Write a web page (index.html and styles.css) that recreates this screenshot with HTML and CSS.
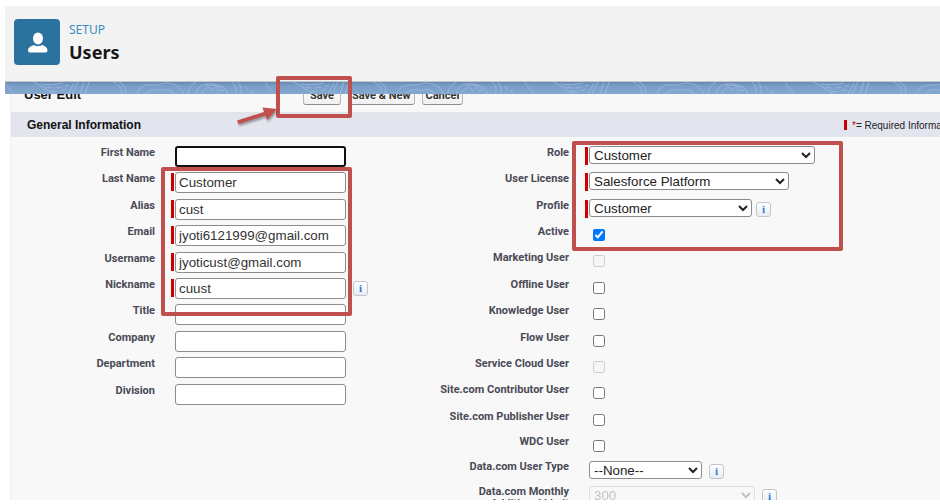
FILE: index.html
```html
<!DOCTYPE html>
<html lang="en">
<head>
<meta charset="utf-8">
<title>Users</title>
<link rel="stylesheet" href="styles.css">
</head>
<body>
<div class="page">
  <header class="setup-header">
    <svg class="setup-icon" viewBox="0 0 46 46" aria-hidden="true">
      <rect width="46" height="46" rx="4"/>
      <ellipse cx="24" cy="19.500" rx="5" ry="6"/>
      <path d="M14 31.500c0-3 3-4.500 6-5.500 1 .8 2.500 1.200 4 1.200s3-.4 4-1.200c3 1 5.500 2.500 5.500 5.500 0 1.200-.8 2-2 2H16c-1.200 0-2-.8-2-2z"/>
    </svg>
    <div class="setup-heading">
      <p class="eyebrow">SETUP</p>
      <h1>Users</h1>
    </div>
  </header>
  <svg class="band" aria-hidden="true">
    <defs>
      <linearGradient id="shade" x1="0" y1="0" x2="0" y2="1">
        <stop offset="0" stop-color="#6787ad"/>
        <stop offset=".3" stop-color="#7a9dc8"/>
        <stop offset="1" stop-color="#85a8d0"/>
      </linearGradient>
      <pattern id="topo" width="260" height="12" patternUnits="userSpaceOnUse">
        <g fill="none" stroke="#a9c3e1" stroke-width="1" opacity=".6">
          <path d="M28 0c8 3 12 7 20 12M36 2c7 1 14 1 22-1M40 5l7 1M50 6l6-1M46 9l6 1M56 9l5-2M60 4l4-1M63 12l6-11M67 12l6-12M75 12l4-12M80 12l4-12"/>
          <path d="M108 0c6 2 10 7 8 12M114 0c6 3 8 8 6 12M132 12c2-7 8-10 15-9s9-2 14-2 16 3 17 11M141 12c3-4 8-5 13-4s12-3 15 4"/>
          <path d="M183 12c0-5 3-9 8-12M191 12c1-8 8-11 16-10s15 3 15 10M197 11c2-4 5-6 9-5l1 3 4-4 3 4 5-1M200 4c6-2 13-1 17 3M227 0c4 3 5 8 3 12M233 0c3 4 4 8 3 12"/>
          <path d="M240 4l2 4M246 8l2 4M0 0c2 5 6 8 9 12"/>
        </g>
      </pattern>
    </defs>
    <rect width="100%" height="12" fill="url(#shade)"/>
    <rect width="100%" height="12" fill="url(#topo)"/>
  </svg>

  <main class="panel">
    <form>
      <div class="action-bar">
        <h2>User Edit</h2>
        <div class="actions">
          <button type="button">Save</button>
          <button type="button">Save &amp; New</button>
          <button type="button">Cancel</button>
        </div>
      </div>
      <div class="section-bar">
        <h3>General Information</h3>
        <p class="legend"><i class="mark"></i><span class="star">*</span>= Required Information</p>
      </div>

      <div class="columns">
        <div class="rows rows-left">
          <div class="row"><label for="first">First Name</label><i class="bar"></i><input class="focused" id="first" type="text"></div>
          <div class="row"><label for="last">Last Name</label><i class="bar required"></i><input id="last" type="text" value="Customer"></div>
          <div class="row"><label for="alias">Alias</label><i class="bar required"></i><input id="alias" type="text" value="cust"></div>
          <div class="row"><label for="email">Email</label><i class="bar required"></i><input id="email" type="text" value="jyoti6121999@gmail.com"></div>
          <div class="row"><label for="username">Username</label><i class="bar required"></i><input id="username" type="text" value="jyoticust@gmail.com"></div>
          <div class="row"><label for="nick">Nickname</label><i class="bar required"></i><input id="nick" type="text" value="cuust"><span class="info">i</span></div>
          <div class="row"><label for="title">Title</label><i class="bar"></i><input id="title" type="text"></div>
          <div class="row"><label for="company">Company</label><i class="bar"></i><input id="company" type="text"></div>
          <div class="row"><label for="department">Department</label><i class="bar"></i><input id="department" type="text"></div>
          <div class="row"><label for="division">Division</label><i class="bar"></i><input id="division" type="text"></div>
        </div>
        <div>
          <div class="rows rows-right">
            <div class="row"><label for="role">Role</label><i class="bar required"></i><select class="w-role" id="role"><option>Customer</option></select></div>
            <div class="row"><label for="license">User License</label><i class="bar required"></i><select class="w-license" id="license"><option>Salesforce Platform</option></select></div>
            <div class="row"><label for="profile">Profile</label><i class="bar required"></i><select class="w-profile" id="profile"><option>Customer</option></select><span class="info near">i</span></div>
            <div class="row"><label for="active">Active</label><i class="bar"></i><input id="active" type="checkbox" checked></div>
            <div class="row"><label for="marketing">Marketing User</label><i class="bar"></i><input id="marketing" type="checkbox" disabled></div>
            <div class="row"><label for="offline">Offline User</label><i class="bar"></i><input id="offline" type="checkbox"></div>
            <div class="row"><label for="knowledge">Knowledge User</label><i class="bar"></i><input id="knowledge" type="checkbox"></div>
            <div class="row"><label for="flow">Flow User</label><i class="bar"></i><input id="flow" type="checkbox"></div>
            <div class="row"><label for="cloud">Service Cloud User</label><i class="bar"></i><input id="cloud" type="checkbox" disabled></div>
            <div class="row"><label for="contributor">Site.com Contributor User</label><i class="bar"></i><input id="contributor" type="checkbox"></div>
            <div class="row"><label for="publisher">Site.com Publisher User</label><i class="bar"></i><input id="publisher" type="checkbox"></div>
          </div>
          <div class="rows rows-compact">
            <div class="row"><label for="wdc">WDC User</label><i class="bar"></i><input id="wdc" type="checkbox"></div>
            <div class="row"><label for="datatype">Data.com User Type</label><i class="bar"></i><select class="w-type" id="datatype"><option>--None--</option></select><span class="info">i</span></div>
            <div class="row"><label for="limit">Data.com Monthly Additional Limit</label><i class="bar"></i><select class="w-limit" id="limit" disabled><option>300</option></select><span class="info">i</span></div>
          </div>
        </div>
      </div>
    </form>
  </main>
</div>

<div class="callout callout-save"></div>
<div class="callout callout-fields"></div>
<div class="callout callout-access"></div>
<svg class="arrow" viewBox="0 0 44 24" aria-hidden="true">
  <path d="M1 16.500 28 8 26.500 3.500 41 5 31 16 29.500 11.500 2.500 20z"/>
</svg>
</body>
</html>
```
FILE: styles.css
```css
* { box-sizing: border-box; }

body {
  margin: 0;
  background: #fff;
  color: #222;
  font-family: "Liberation Sans", Arial, sans-serif;
}

h1, h2, h3, p { margin: 0; }

.page {
  display: flex;
  flex-direction: column;
  height: 100vh;
  padding: 6px 0 4px 5px;
  overflow: hidden;
}

.setup-header {
  display: flex;
  gap: 9px;
  flex: none;
  height: 76px;
  padding: 13px 9px;
  background: #f3f3f3;
  border-bottom: 1px solid #c4c8cc;
}

.setup-icon { width: 46px; height: 46px; fill: #fff; }
.setup-icon rect { fill: #2a739e; }

.setup-heading { font-family: "Noto Sans", "Open Sans", sans-serif; }
.eyebrow { font-size: 12px; line-height: 21px; color: #3a8bbb; }
h1 { font-size: 18px; line-height: 25px; color: #181818; }

.band { display: block; flex: none; width: 100%; height: 12px; }

.panel {
  flex: 1;
  min-height: 0;
  margin-left: 5px;
  overflow: hidden;
  background: #f8f8f8;
  border-left: 1px solid #f0f0f0;
}

.action-bar {
  display: flex;
  align-items: flex-end;
  height: 19px;
  padding: 0 13px 7px;
  border-bottom: 1px solid #e4e4e4;
}
h2 { flex: none; width: 279px; font-size: 13px; line-height: 20px; color: #111; }
.actions { display: flex; gap: 7px; }
button {
  min-width: 38px;
  height: 20px;
  padding: 0 3px;
  border: 1px solid #b5b5b5;
  border-bottom-color: #8f8f8f;
  border-radius: 3px;
  background: linear-gradient(#fff, #f0f0f0);
  color: #333;
  font: bold 11px Roboto, sans-serif;
}

.section-bar {
  display: flex;
  align-items: center;
  justify-content: space-between;
  height: 24px;
  padding-left: 16px;
  margin-bottom: 5px;
  background: #e2e4ee;
}
h3 { font-size: 12px; line-height: 16px; color: #111; }
.legend {
  display: flex;
  align-items: center;
  flex: none;
  width: 96px;
  height: 20px;
  overflow: hidden;
  white-space: nowrap;
  font-size: 10px;
}
.mark { flex: none; width: 3px; height: 10px; margin-right: 5px; background: #c00; }
.star { color: #c00; }

.columns { display: grid; grid-template-columns: 414px 1fr; }
.rows { display: grid; grid-auto-rows: 1fr; }
.rows-left { height: 264px; align-self: start; }
.rows-right { height: 290px; }
.rows-compact { grid-auto-rows: 25px; }

.row { display: flex; align-items: flex-start; min-height: 0; }
.row label {
  width: 134px;
  margin-left: 10px;
  padding-top: 4px;
  text-align: right;
  color: #4a4a56;
  font: bold 11px/14px Roboto, sans-serif;
}
.rows-compact label { line-height: 12px; }

.bar { flex: none; width: 3px; height: 18px; margin: 5px 1px 0 16px; }
.required { background: #c00; }

input[type="text"] {
  width: 171px;
  height: 21px;
  margin: 4px 0 0;
  padding: 0 3px;
  border: 1px solid #8c8c8c;
  border-radius: 3px;
  background: #fff;
  color: #333;
  font-family: "Liberation Sans", Arial, sans-serif;
}
input.focused { border: 2px solid #101010; }

input[type="checkbox"] { width: 12px; height: 12px; margin: 8px 0 0 4px; }

select {
  height: 18px;
  margin: 4px 0 0;
  padding: 0;
  border: 1px solid #8c8c8c;
  border-radius: 3px;
  background-color: #fff;
  color: #222;
  font-family: "Liberation Sans", Arial, sans-serif;
}
select:disabled { border-color: #d5d5d5; background-color: #f8f8f8; color: #aaa; }
.w-role { width: 226px; }
.w-license { width: 200px; }
.w-profile { width: 163px; }
.w-type { width: 113px; }
.w-limit { width: 166px; }

.info {
  width: 15px;
  height: 15px;
  margin: 7px 0 0 7px;
  border: 1px solid #c2c6cc;
  border-radius: 3px;
  background: linear-gradient(#fff, #e8ecf2);
  color: #1f7be0;
  text-align: center;
  font: bold 11px/13px "Liberation Serif", serif;
}
.info.near { margin-left: 4px; }

.callout {
  position: absolute;
  border: 4px solid #c0504d;
  border-radius: 2px;
  pointer-events: none;
}
.callout-save { left: 276px; top: 76px; width: 76px; height: 42px; }
.callout-fields { left: 161px; top: 167px; width: 191px; height: 149px; }
.callout-access { left: 572px; top: 141px; width: 271px; height: 110px; }

.arrow {
  position: absolute;
  left: 236px;
  top: 104px;
  width: 44px;
  height: 24px;
  fill: #c0504d;
  filter: drop-shadow(1px 2px 1px rgba(0, 0, 0, .35));
}
```
